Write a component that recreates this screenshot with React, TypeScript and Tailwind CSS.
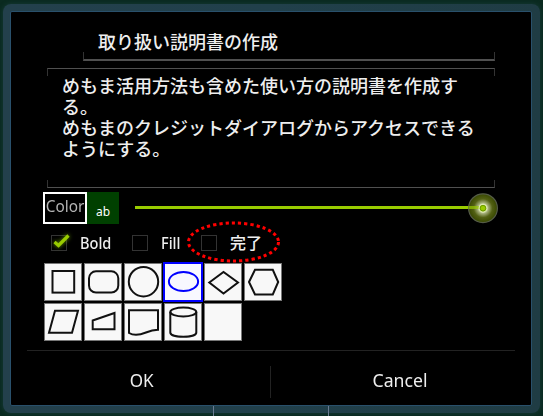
import type { ReactNode } from "react";

const jp = "font-['Noto_Sans','Noto_Sans_CJK_JP',sans-serif]";

function CheckBox({ checked = false }: { checked?: boolean }) {
  return (
    <span className="relative block size-4 shrink-0 border border-[#333333]">
      {checked && (
        <svg className="absolute -left-px -top-1 h-5 w-6 drop-shadow-[0_0_2px_#669900]" viewBox="0 0 24 20" fill="none">
          <path d="M3.5 10 L7.5 13.5 L17.5 3.5" stroke="#99cc00" strokeWidth="3.2" />
        </svg>
      )}
    </span>
  );
}

function Tile({ children, selected = false }: { children?: ReactNode; selected?: boolean }) {
  return (
    <button
      className={
        selected
          ? "size-10 border-2 border-[#0000ff] bg-[#f8f8ff] text-[#0000ff]"
          : "m-px size-[38px] border border-[#777777] bg-[#f8f8f8] text-[#111111]"
      }
    >
      <svg
        className="-m-0.5 size-10"
        viewBox="0 0 40 40"
        fill="none"
        stroke="currentColor"
        strokeWidth="2"
      >
        {children}
      </svg>
    </button>
  );
}

export default function App() {
  return (
    <div className={`relative h-[416px] w-[543px] overflow-hidden bg-[#0a2a20] pl-[3px] pt-1 text-[#eeeeee] ${jp}`}>
      <div className="h-[409px] w-[537px] rounded-lg bg-linear-to-r from-[#23404c] via-[#21404b] to-[#1f3c44] pl-[7px] pt-[7px] shadow-[0_0_4px_#173c38]">
        <div className="flex h-[395px] w-[522px] flex-col rounded-[2px] border border-[#29506b] bg-black">
          <div className="ml-[72px] mt-[18px] h-[29px] w-[412px]">
            <div className="flex h-[25px] items-center pl-[15px] text-[18px] font-medium leading-[21px]">取り扱い説明書の作成</div>
          </div>
          <div className="-mt-[7px] ml-[72px] h-[9px] w-[412px] border-x border-b-2 border-x-[#333333] border-b-[#505050]" />
          <div className="ml-[36px] mt-[7px] h-2 w-[448px] border-x border-t border-x-[#333333] border-t-[#505050]" />
          <div className="ml-[51px] h-[104px] w-[433px] text-[18px] font-medium leading-[21px]">
            めもま活用方法も含めた使い方の説明書を作成す
            <br />
            る。
            <br />
            めもまのクレジットダイアログからアクセスできる
            <br />
            ようにする。
          </div>
          <div className="ml-[36px] h-2 w-[448px] border-x border-b border-x-[#333333] border-b-[#505050]" />

          <div className="ml-[32px] mt-1 flex h-8 items-center">
            <div className="flex h-8 w-11 items-center justify-center border-2 border-white pb-1 text-[16px] text-[#b4b4b4]">
              <span className="inline-block scale-x-[.96]">Color</span>
            </div>
            <div className="flex size-8 items-center justify-center bg-[#004000] pt-2 text-[12px] text-white">ab</div>
            <div className="relative -top-px ml-4 h-[3px] w-[348px] bg-[#99cc00]">
              <svg className="absolute -right-4 -top-3.5 size-8" viewBox="0 0 32 32">
                <defs>
                  <radialGradient id="halo">
                    <stop offset="0.2" stopColor="#f4f8dd" />
                    <stop offset="0.38" stopColor="#a2ac77" />
                    <stop offset="0.65" stopColor="#526014" />
                    <stop offset="1" stopColor="#384700" />
                  </radialGradient>
                </defs>
                <circle cx="16" cy="16.2" r="14.4" fill="url(#halo)" stroke="#555c48" strokeWidth="1.2" />
                <path d="M1.5 15.5H13" stroke="#99cc00" strokeWidth="3" opacity=".7" />
                <circle cx="16" cy="16.2" r="3.8" fill="#99cc00" stroke="#dce8ae" strokeWidth="1.3" />
                <circle cx="16" cy="16.2" r="2.8" fill="none" stroke="#6c9900" strokeWidth="1" />
              </svg>
            </div>
          </div>

          <div className="relative ml-[40px] mt-[11px] flex h-4 items-center text-[16px] font-medium leading-4">
            <CheckBox checked />
            <span className="ml-[13px] w-[52px]"><span className="inline-block origin-left scale-x-[.91]">Bold</span></span>
            <CheckBox />
            <span className="ml-[13px] w-10"><span className="inline-block origin-left scale-x-[.91]">Fill</span></span>
            <CheckBox />
            <span className="ml-[13px]">完了</span>
            <svg className="absolute left-[134px] -top-4 h-[46px] w-24" viewBox="0 0 96 46" fill="none">
              <ellipse cx="48.5" cy="23" rx="45" ry="19" stroke="#ff0000" strokeWidth="3" strokeDasharray="3.2 3" />
            </svg>
          </div>

          <div className="ml-[32px] mt-[11px] grid w-60 grid-cols-6">
            <Tile><rect x="9.5" y="9" width="21.7" height="21.6" /></Tile>
            <Tile><rect x="6" y="9.3" width="29.3" height="21.3" rx="7" /></Tile>
            <Tile><circle cx="20.5" cy="19.7" r="14.7" /></Tile>
            <Tile selected><ellipse cx="20.5" cy="19.5" rx="14.6" ry="9.5" /></Tile>
            <Tile><path d="M6.3 20.5 20.5 10 35 20.5 20.5 31.5Z" /></Tile>
            <Tile><path d="M6 20 12 7.8H29.8L35.2 20 29.8 32.5H12Z" /></Tile>
            <Tile><path d="M12 8.7H35L29 30.7H6Z" /></Tile>
            <Tile><path d="M9.7 18.5 31.5 11V27.2H9.7Z" /></Tile>
            <Tile><path d="M6 8.3H35V27.7C24 28 22 32.8 13 32.8Q9 32.8 6 31Z" /></Tile>
            <Tile>
              <ellipse cx="20.3" cy="10" rx="13" ry="4.4" />
              <path d="M7.3 10V30.5C7.3 36.3 33.3 36.3 33.3 30.5V10" />
            </Tile>
            <Tile />
          </div>

          <div className="ml-[16px] mt-2 h-px w-[488px] bg-[#222222]" />
          <div className="ml-[16px] flex h-[54px] w-[488px] items-center pt-1 text-[18px]">
            <div className="flex h-full w-[243px] items-center justify-center pr-3.5"><span className="scale-x-[.95]">OK</span></div>
            <div className="mt-1 h-8 w-px bg-[#222222]" />
            <div className="flex h-full w-[244px] items-center justify-center pl-3.5"><span className="scale-x-[.98]">Cancel</span></div>
          </div>
        </div>
        <div className="ml-[203px] flex h-[11px] w-[116px] justify-between">
          <span className="h-full w-px bg-[#6a7b91]" />
          <span className="h-full w-px bg-[#6a7b91]" />
        </div>
      </div>
    </div>
  );
}
